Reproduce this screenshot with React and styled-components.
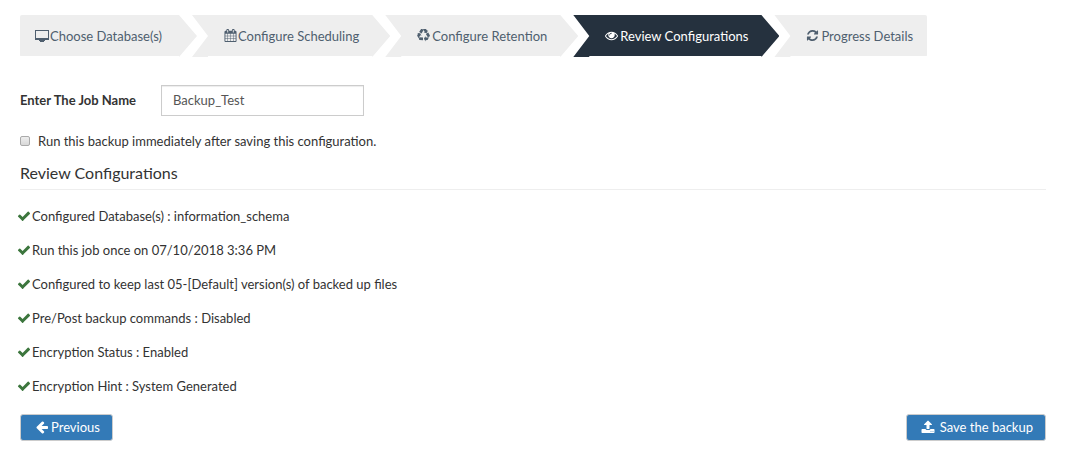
import React, { useState } from "react";
import styled, { createGlobalStyle, css } from "styled-components";

const GlobalStyle = createGlobalStyle`
  * {
    box-sizing: border-box;
  }

  body {
    margin: 0;
    background: #fff;
    color: #333;
    font-family: Lato, "Liberation Sans", sans-serif;
    font-size: 13px;
    line-height: 20px;
  }
`;

const Page = styled.main`
  padding: 15px 43px 20px 20px;
`;

const Steps = styled.ol`
  display: flex;
  margin: 0;
  padding: 0;
  list-style: none;
`;

const Step = styled.li`
  height: 42px;
  & + & {
    margin-left: -5px;
  }
`;

// arrow shaped tab : notch on the left, tip on the right
const middleShape = css`
  padding: 0 31px 1px 32px;
  clip-path: polygon(
    0 0,
    calc(100% - 18px) 0,
    100% 21px,
    calc(100% - 18px) 42px,
    calc(100% - 18px) 41px,
    16px 41px,
    16px 42px,
    0 42px,
    16px 21px
  );
`;

const firstShape = css`
  padding: 0 35px 1px 15px;
  border-radius: 2px 0 0 2px;
  clip-path: polygon(
    0 0,
    calc(100% - 18px) 0,
    100% 21px,
    calc(100% - 18px) 42px,
    calc(100% - 18px) 41px,
    0 41px
  );
`;

const lastShape = css`
  padding: 0 14px 1px 32px;
  border-radius: 0 2px 2px 0;
  clip-path: polygon(
    0 0,
    100% 0,
    100% 41px,
    16px 41px,
    16px 42px,
    0 42px,
    16px 21px
  );
`;

const StepLink = styled.a`
  display: flex;
  align-items: center;
  gap: ${(props) => props.$gap}px;
  height: 42px;
  background: ${(props) => (props.$active ? "#25313e" : "#eee")};
  color: ${(props) => (props.$active ? "#fff" : "#4f5f6f")};
  text-decoration: none;
  white-space: nowrap;
  ${(props) =>
    props.$place === "first"
      ? firstShape
      : props.$place === "last"
      ? lastShape
      : middleShape}
`;

const Icon = styled.svg`
  flex: none;
  width: ${(props) => props.$size}px;
  height: ${(props) => props.$size}px;
  fill: currentColor;
`;

const NameRow = styled.div`
  display: flex;
  align-items: center;
  gap: 25px;
  margin-top: 28px;
`;

const NameLabel = styled.label`
  padding-bottom: 2px;
  font-weight: 700;
`;

const NameInput = styled.input`
  width: 203px;
  height: 31px;
  padding: 4px 11px 6px;
  border: 1px solid #ccc;
  border-radius: 0;
  background: #fff;
  box-shadow: inset 0 1px 1px rgba(0, 0, 0, 0.075);
  color: #555;
  font: inherit;
`;

const CheckRow = styled.div`
  display: flex;
  align-items: center;
  gap: 8px;
  margin-top: 15px;
`;

const Checkbox = styled.input`
  appearance: none;
  width: 10px;
  height: 10px;
  margin: 0;
  border: 1px solid #aaa;
  border-radius: 2px;
  background: linear-gradient(#eee, #d8d8d8);
  &:checked {
    background: #337ab7;
  }
`;

const Title = styled.h2`
  margin: 12px 0 0;
  padding-bottom: 6px;
  border-bottom: 1px solid #eee;
  font-size: 16px;
  font-weight: 400;
  line-height: 20px;
`;

const ReviewList = styled.ul`
  display: flex;
  flex-direction: column;
  gap: 14px;
  margin: 16px 0 0 -3px;
  padding: 0;
  list-style: none;
`;

const ReviewItem = styled.li`
  display: flex;
  align-items: center;
  gap: 1px;
  svg {
    color: #3c763d;
  }
`;

const Footer = styled.footer`
  display: flex;
  justify-content: space-between;
  margin-top: 18px;
`;

const Button = styled.button`
  display: flex;
  align-items: center;
  gap: ${(props) => props.$gap}px;
  height: 27px;
  padding: 0 12px 2px 14px;
  border: 1px solid #ccc;
  border-radius: 3px;
  background: #337ab7;
  color: #fff;
  font: inherit;
  cursor: pointer;
`;

const paths = {
  desktop:
    "M0 128h1792v1280h-512v128h-128v128h-512v-128h-128v-128h-512zm128 128v896h1536v-896z",
  calendar:
    "M192 1664h288v-288h-288v288zm352 0h320v-288h-320v288zm-352-352h288v-320h-288v320zm352 0h320v-320h-320v320zm-352-384h288v-288h-288v288zm736 736h320v-288h-320v288zm-384-736h320v-288h-320v288zm768 736h288v-288h-288v288zm-384-352h320v-320h-320v320zm-352-864v-288q0-13-9.5-22.5t-22.5-9.5h-64q-13 0-22.5 9.5t-9.5 22.5v288q0 13 9.5 22.5t22.5 9.5h64q13 0 22.5-9.5t9.5-22.5zm736 864h288v-320h-288v320zm-384-384h320v-288h-320v288zm384 0h288v-288h-288v288zm32-480v-288q0-13-9.5-22.5t-22.5-9.5h-64q-13 0-22.5 9.5t-9.5 22.5v288q0 13 9.5 22.5t22.5 9.5h64q13 0 22.5-9.5t9.5-22.5zm384-64v1280q0 52-38 90t-90 38h-1408q-52 0-90-38t-38-90v-1280q0-52 38-90t90-38h128v-96q0-66 47-113t113-47h64q66 0 113 47t47 113v96h384v-96q0-66 47-113t113-47h64q66 0 113 47t47 113v96h128q52 0 90 38t38 90z",
  recycle:
    "M836 1169l-15 368-2 22-420-29q-36-3-67-31.5t-47-65.5q-11-27-14.5-55t4-65 12-55 21.5-64 19-53q78 12 509 28zm-387-586l180 379-147-92q-63 72-111.5 144.5t-72.5 125-39.5 94.5-18.5 63l-4 21-190-357q-17-26-18-56t6-47l8-18q35-63 114-188l-140-86zm1231 517l-188 359q-12 29-36.5 46.5t-43.5 20.5l-18 4q-71 7-219 12l8 164-230-367 211-362 7 173q170 16 283 5t170-33zm-785-924q-47 63-265 435l-317-187-19-12 225-356q20-31 60-45t80-10q24 2 48.5 12t42 21 41.5 33 36 34.5 36 39.5 32 35zm655 307l212 363q18 37 12.5 76t-27.5 74q-13 20-33 37t-38 28-48.5 22-47 16-51.5 14-46 12q-34-72-265-436l313-195zm-143-226l142-83-220 373-419-20 151-86q-34-89-75-166t-75.5-123.5-64.5-80-47-46.5l-17-13 405 1q31-3 58 10.5t39 28.5l11 15q39 61 112 190z",
  eye: "M1664 960q-152-236-381-353 61 104 61 225 0 185-131.5 316.5t-316.5 131.5-316.5-131.5-131.5-316.5q0-121 61-225-229 117-381 353 133 205 333.5 326.5t434.5 121.5 434.5-121.5 333.5-326.5zm-720-384q0-20-14-34t-34-14q-125 0-214.5 89.5t-89.5 214.5q0 20 14 34t34 14 34-14 14-34q0-86 61-147t147-61q20 0 34-14t14-34zm848 384q0 34-20 69-140 230-376.5 368.5t-499.5 138.5-499.5-139-376.5-368q-20-35-20-69t20-69q140-229 376.5-368t499.5-139 499.5 139 376.5 368q20 35 20 69z",
  refresh:
    "M1639 1056q0 5-1 7-64 268-268 434.5t-478 166.5q-146 0-282.5-55t-243.5-157l-129 129q-19 19-45 19t-45-19-19-45v-448q0-26 19-45t45-19h448q26 0 45 19t19 45-19 45l-137 137q71 66 161 102t187 36q134 0 250-65t186-179q11-17 53-117 8-23 30-23h192q13 0 22.5 9.5t9.5 22.5zm25-800v448q0 26-19 45t-45 19h-448q-26 0-45-19t-19-45 19-45l138-138q-148-137-349-137-134 0-250 65t-186 179q-11 17-53 117-8 23-30 23h-199q-13 0-22.5-9.5t-9.5-22.5v-7q65-268 270-434.5t480-166.5q146 0 284 55.5t245 156.5l130-129q19-19 45-19t45 19 19 45z",
  check:
    "M1671 566q0 40-28 68l-724 724-136 136q-28 28-68 28t-68-28l-136-136-362-362q-28-28-28-68t28-68l136-136q28-28 68-28t68 28l294 295 656-657q28-28 68-28t68 28l136 136q28 28 28 68z",
  arrowLeft:
    "M1664 896v128q0 53-32.5 90.5t-84.5 37.5h-704l293 294q38 36 38 90t-38 90l-75 76q-37 37-90 37-52 0-91-37l-651-652q-37-37-37-90 0-52 37-91l651-650q38-38 91-38 52 0 90 38l75 74q38 38 38 91t-38 91l-293 293h704q52 0 84.5 37.5t32.5 90.5z",
  upload:
    "M1344 1472q0-26-19-45t-45-19-45 19-19 45 19 45 45 19 45-19 19-45zm256 0q0-26-19-45t-45-19-45 19-19 45 19 45 45 19 45-19 19-45zm128-224v320q0 40-28 68t-68 28h-1472q-40 0-68-28t-28-68v-320q0-40 28-68t68-28h427q21 56 70.5 92t110.5 36h256q61 0 110.5-36t70.5-92h427q40 0 68 28t28 68zm-325-648q-17 40-59 40h-256v448q0 26-19 45t-45 19h-256q-26 0-45-19t-19-45v-448h-256q-42 0-59-40-17-39 14-69l448-448q18-19 45-19t45 19l448 448q31 30 14 69z",
};

function Glyph({ name, size = 14 }) {
  return (
    <Icon $size={size} viewBox="0 0 1792 1792" aria-hidden="true">
      <path fillRule="evenodd" d={paths[name]} />
    </Icon>
  );
}

const steps = [
  { title: "Choose Database(s)", icon: "desktop", size: 14, gap: 1, place: "first" },
  { title: "Configure Scheduling", icon: "calendar", size: 13, gap: 1 },
  { title: "Configure Retention", icon: "recycle", size: 13, gap: 2 },
  { title: "Review Configurations", icon: "eye", size: 13, gap: 2, active: true },
  { title: "Progress Details", icon: "refresh", size: 13, gap: 2, place: "last" },
];

const reviews = [
  "Configured Database(s) : information_schema",
  "Run this job once on 07/10/2018 3:36 PM",
  "Configured to keep last 05-[Default] version(s) of backed up files",
  "Pre/Post backup commands : Disabled",
  "Encryption Status : Enabled",
  "Encryption Hint : System Generated",
];

function App() {
  const [jobName, setJobName] = useState("Backup_Test");
  const [runNow, setRunNow] = useState(false);

  return (
    <>
      <GlobalStyle />
      <Page>
        <Steps>
          {steps.map((step) => (
            <Step key={step.title}>
              <StepLink
                href="#"
                $active={step.active}
                $place={step.place}
                $gap={step.gap}
                aria-current={step.active ? "step" : undefined}
              >
                <Glyph name={step.icon} size={step.size} />
                <span>{step.title}</span>
              </StepLink>
            </Step>
          ))}
        </Steps>

        <NameRow>
          <NameLabel htmlFor="job-name">Enter The Job Name</NameLabel>
          <NameInput
            id="job-name"
            type="text"
            value={jobName}
            onChange={(e) => setJobName(e.target.value)}
          />
        </NameRow>

        <CheckRow>
          <Checkbox
            id="run-now"
            type="checkbox"
            checked={runNow}
            onChange={(e) => setRunNow(e.target.checked)}
          />
          <label htmlFor="run-now">
            Run this backup immediately after saving this configuration.
          </label>
        </CheckRow>

        <Title>Review Configurations</Title>
        <ReviewList>
          {reviews.map((text) => (
            <ReviewItem key={text}>
              <Glyph name="check" />
              <span>{text}</span>
            </ReviewItem>
          ))}
        </ReviewList>

        <Footer>
          <Button type="button" $gap={2}>
            <Glyph name="arrowLeft" />
            Previous
          </Button>
          <Button type="button" $gap={5}>
            <Glyph name="upload" />
            Save the backup
          </Button>
        </Footer>
      </Page>
    </>
  );
}

export default App;
